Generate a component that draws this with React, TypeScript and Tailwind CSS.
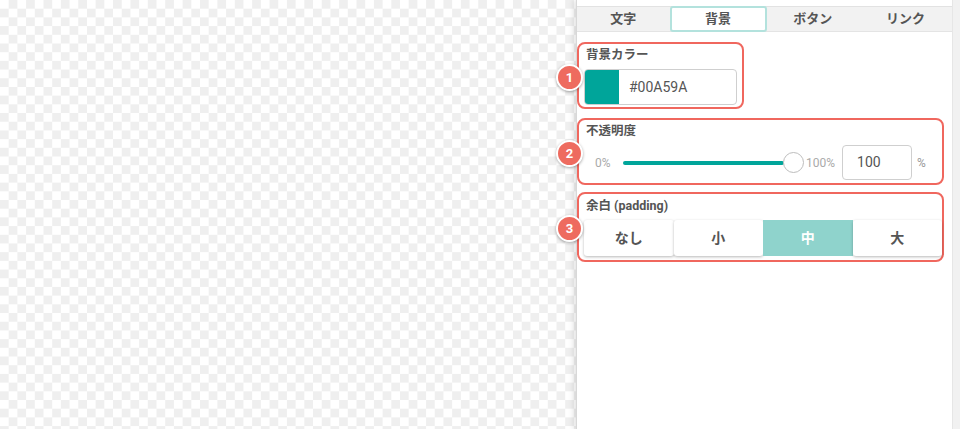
const Badge = ({ n }: { n: number }) => (
  <div className="absolute -left-[23px] w-[27px] h-[27px] rounded-full bg-[#ee6b5f] border-2 border-white shadow-[0_1px_3px_rgba(0,0,0,0.35)] flex items-center justify-center text-white text-[13px] font-bold leading-none">
    {n}
  </div>
);

const App = () => {
  const tabs = ["文字", "背景", "ボタン", "リンク"];
  const sizes = ["なし", "小", "中", "大"];

  return (
    <div className="flex w-[960px] h-[429px] overflow-hidden font-['Roboto','Noto_Sans_CJK_JP',sans-serif] text-[#555]">
      {/* transparent canvas */}
      <div className="flex-1 bg-[image:conic-gradient(#efefef_25%,#ffffff_0_50%,#efefef_0_75%,#ffffff_0)] bg-[length:17.4px_17.4px]" />

      {/* settings panel */}
      <div className="w-[376px] bg-white border-l border-[#d8d8d8] shadow-[-3px_0_5px_rgba(0,0,0,0.10)] flex flex-col">
        <div className="h-[7px] border-b border-[#e2e2e2]" />
        <div className="flex h-[25px] bg-[#f2f2f2] border-b border-[#e4e4e4]">
          {tabs.map((t) => (
            <div
              key={t}
              className={
                t === "背景"
                  ? "flex-1 -mt-px h-[26px] flex items-center justify-center text-[13px] font-bold bg-white border-2 border-[#b3e2dd] rounded-[3px]"
                  : "flex-1 flex items-center justify-center text-[13px] font-bold"
              }
            >
              {t}
            </div>
          ))}
        </div>

        <div className="pr-[7px] flex flex-col">
          {/* 1: background colour */}
          <div className="relative mt-[10px] w-[167px] h-[67px] border-2 border-[#f0675e] rounded-[8px] px-[5px] pt-[2px]">
            <div className="pl-[2px] text-[12.5px] font-bold leading-[18px]">背景カラー</div>
            <div className="relative mt-[5px] flex items-center h-[36px] border border-[#cfcfcf] rounded-[4px] overflow-hidden">
              <div className="w-[34px] h-full bg-[#00a59a]" />
              <div className="pl-[10px] text-[14px] text-[#555]">#00A59A</div>
            </div>
            <div className="absolute top-[20px] left-0">
              <Badge n={1} />
            </div>
          </div>

          {/* 2: opacity */}
          <div className="relative mt-[9px] w-[367px] h-[67px] border-2 border-[#f0675e] rounded-[8px] px-[5px] pt-[2px]">
            <div className="pl-[2px] text-[12.5px] font-bold leading-[18px]">不透明度</div>
            <div className="mt-[5px] flex items-center h-[35px]">
              <span className="ml-[11px] w-[17px] text-[12px] text-[#aaa]">0%</span>
              <div className="ml-[11px] flex items-center">
                <div className="w-[161px] h-[4px] rounded-full bg-[#00a59a]" />
                <div className="-ml-px w-[21px] h-[21px] rounded-full bg-white border border-[#bdbdbd]" />
              </div>
              <span className="ml-[2px] text-[12px] text-[#aaa]">100%</span>
              <div className="ml-[7px] w-[70px] h-[35px] border border-[#cfcfcf] rounded-[4px] flex items-center pl-[14px] text-[14px] text-[#555]">
                100
              </div>
              <span className="ml-[5px] text-[12px] text-[#999]">%</span>
            </div>
            <div className="absolute top-[20px] left-0">
              <Badge n={2} />
            </div>
          </div>

          {/* 3: padding */}
          <div className="relative mt-[7px] w-[367px] h-[70px] border-2 border-[#f0675e] rounded-[8px] pl-[5px] pr-0 pt-[3px]">
            <div className="pl-[2px] text-[12.5px] font-bold leading-[18px]">余白 (padding)</div>
            <div className="mt-[5px] grid grid-cols-4 h-[36px] w-[358px]">
              {sizes.map((s) => (
                <div
                  key={s}
                  className={
                    s === "中"
                      ? "flex items-center justify-center text-[14px] font-bold text-white bg-[#8fd3cc]"
                      : "flex items-center justify-center text-[14px] font-bold text-[#555] bg-white rounded-[3px] shadow-[0_1px_3px_rgba(0,0,0,0.28)]"
                  }
                >
                  {s}
                </div>
              ))}
            </div>
            <div className="absolute top-[21px] left-0">
              <Badge n={3} />
            </div>
          </div>
        </div>
      </div>

      {/* scrollbar strip */}
      <div className="w-[8px] bg-[#f1f1f1] border-l border-[#e6e6e6]" />
    </div>
  );
};

export default App;
